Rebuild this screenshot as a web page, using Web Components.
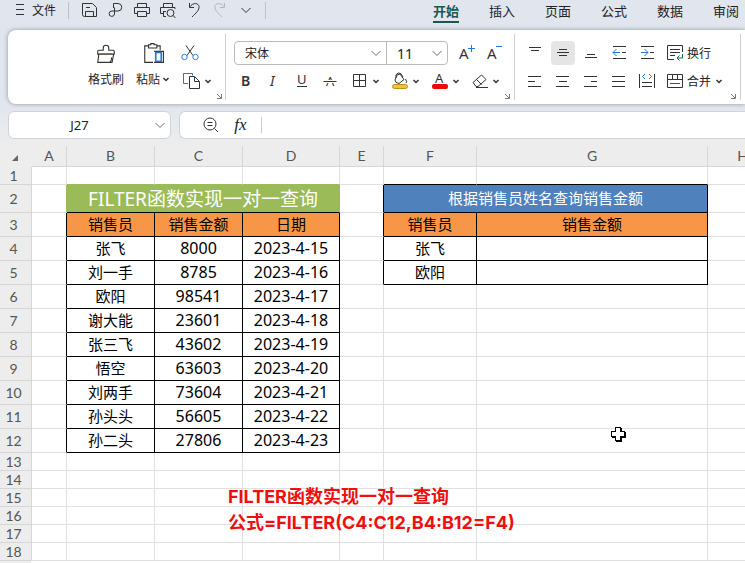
<!DOCTYPE html>
<html lang="zh-CN">
<head>
<meta charset="UTF-8">
<meta name="viewport" content="width=device-width, initial-scale=1">
<title>FILTER函数实现一对一查询</title>
<style>
    body {
        margin: 0;
        font-family: "Noto Sans", "Noto Sans CJK SC", sans-serif;
        font-size: 12px;
        color: #222;
    }
</style>
</head>
<body>
<sheet-app></sheet-app>

<script>
// every icon sits on a 20x20 box
const icons = {
    menu: '<path d="M6 4.5h8M6 9.5h8M6 14.5h8"/>',
    save: '<path d="M2.5 3.5h10l4 4v9h-12a2 2 0 0 1-2-2zM5.5 16.5v-5h8v5M6 7.5h4"/>',
    share: '<path d="M7.5 8V3.500h4.500a3.500 3.500 0 0 1 0 7.500H6a2.700 2.700 0 1 0 2.500 3V7.500"/>',
    print: '<path d="M5.5 7V3.5h9V7M5.5 13.5h-3v-6h15v6h-3M5.5 11.5h9v5h-9z"/>',
    preview: '<path d="M5.5 7V3.5h9V7M5.5 13.5h-3v-6h14.5V9M5 11.5h3M5.5 11.5v5H8"/><circle cx="12.5" cy="13" r="3.5"/><path d="M15 15.5l2.5 2.5"/>',
    undo: '<path d="M5.5 3v4.5H10M5.5 7c4-5 9-4 9.5-.5S12 13 8 17"/>',
    redo: '<path stroke="#b2b7be" d="M14.5 3v4.5H10M14.5 7c-4-5-9-4-9.5-.5S8 13 12 17"/>',
    down: '<path d="M5.5 8l4.5 4.5L14.5 8"/>',
    brush: '<path d="M3.5 7.5h4V5.5a2.5 2.5 0 1 1 5 0v2h4q1 0 1 1v2.5h-15V8.5q0-1 1-1M3.5 11l-1 7.5h13l1.500-7.5M13.5 18.5q2-2 1.5-4.5"/><path stroke="#d2590f" d="M4 10.5h12"/>',
    paste: '<path d="M6 3.5H2.5v15H10M14 3.5h2.5v4M6 2.5h2v-1h3v1h2.500v3H6z"/><path d="M11 8.5h8.5v10H11"/><path stroke="#2377d9" stroke-width="1.5" d="M12.5 9.5h5v8h-5z"/>',
    cut: '<path d="M6 2.5l7 10M14 2.5L7 12.5"/><g stroke="#2e7cd6"><circle cx="4.5" cy="14" r="2.7"/><circle cx="15.5" cy="14" r="2.7"/></g>',
    copy: '<path stroke="#2377d9" d="M6 12.5H1.5v-10h9v2"/><path d="M7.5 5.5h5l5 5v7h-10zM12.5 6v4.5H17"/>',
    bold: '<text x="5" y="15" font-size="14" font-weight="600">B</text>',
    italic: '<text x="6" y="15" font-size="14" font-style="italic" font-family="DejaVu Sans Mono">I</text>',
    underline: '<text x="5" y="13" font-size="13">U</text><path d="M5 15.5h10"/>',
    strike: '<text x="6" y="15" font-size="13">A</text><path stroke="#fff" stroke-width="3" d="M3 10.5h14"/><path d="M3.5 10.5h13"/>',
    grow: '<text x="3" y="16" font-size="15">A</text><path stroke="#2377d9" d="M12 5.5h7M15.5 2v7"/>',
    shrink: '<text x="3" y="16" font-size="15">A</text><path stroke="#2377d9" d="M12 3.5h6"/>',
    border: '<path d="M3.5 3.5h12v12h-12zM9.5 3.5v12M3.5 9.5h12"/>',
    fill: '<path d="M7 4L5 9q0 3 4 3.500l5-4-4-5.5zM6 7q-1-4 2-5t5 4M15.5 8q2 3 .5 4"/><rect x="2.5" y="13.5" width="15" height="4" rx="2" fill="#f0c337" stroke="#bd9122"/>',
    color: '<text x="5" y="12" font-size="13">A</text><rect x="2" y="13" width="16" height="5" rx="2" fill="#ee0a0a" stroke="none"/>',
    erase: '<path d="M3 11.5L11.5 4l4.5 4.5-8 7H6zM6.500 8.500l5 5M6 16.5h12"/>',
    top: '<path d="M4 4.5h12M6 7.5h8"/>',
    middle: '<path d="M6 6.5h8M4 9.5h12M6 12.5h8"/>',
    bottom: '<path d="M6 11.5h8M4 14.5h12"/>',
    outdent: '<path d="M4 3.5h13M13 9.5h4M4 15.5h13"/><path stroke="#2377d9" d="M11 9.5H4M7.5 6L4 9.5 7.5 13"/>',
    indent: '<path d="M4 3.5h13M13 9.5h4M4 15.5h13"/><path stroke="#2377d9" d="M4 9.5h7M7.5 6L11 9.5 7.5 13"/>',
    left: '<path d="M3 5.5h13M3 10.5h7M3 15.5h13"/>',
    center: '<path d="M3 5.5h13M6 10.5h8M3 15.5h13"/>',
    right: '<path d="M3 5.5h13M10 10.5h6M3 15.5h13"/>',
    justify: '<path d="M3 5.5h13M3 10.5h13M3 15.5h13"/>',
    distribute: '<path d="M2.5 3v14M17.5 3v14M5 11.5h10M5 15.5h10"/><path stroke="#2377d9" d="M8 3L5.5 5.5 8 8M12 3l2.5 2.5L12 8"/>',
    wrap: '<path d="M9 16.5H2.5v-14h15V9M5 6.5h10M5 9.5h10M5 12.5h5"/><path stroke="#1d655b" d="M17.5 11v4H12M14.5 12.5L12 15l2.5 2.5"/>',
    merge: '<path d="M2.5 3.5h15v13h-15zM2.5 8.5h15M7.5 3.5v5M12.5 3.5v5"/><path stroke="#1d655b" d="M5 12.5h10"/>',
    search: '<circle cx="10" cy="9" r="6"/><path d="M14.5 13.5L18 17M7.5 7.5h5M7.5 10.5h5"/>'
}

class UiIcon extends HTMLElement {
    connectedCallback() {
        this.attachShadow({mode: 'open'}).innerHTML = /*html*/`
            <style>
                :host { display: block; width: var(--icon-size, 20px); height: var(--icon-size, 20px); }
                svg { display: block; width: 100%; height: 100%; fill: none; stroke: #333; overflow: visible; }
                text { fill: #333; stroke: none; font-family: "Noto Sans", sans-serif; }
            </style>
            <svg viewBox="0 0 20 20" aria-hidden="true">${icons[this.getAttribute('name')]}</svg>
        `
    }
}

class UiCaret extends HTMLElement {
    connectedCallback() {
        this.attachShadow({mode: 'open'}).innerHTML = /*html*/`
            <style>
                :host { display: block; width: 8px; height: 8px; }
                svg { display: block; fill: none; stroke: #333; stroke-width: 1.5; }
            </style>
            <svg width="8" height="8" viewBox="0 0 8 8" aria-hidden="true"><path d="M1.5 3L4 5.5 6.5 3"/></svg>
        `
    }
}

class ToolButton extends HTMLElement {
    connectedCallback() {
        const caret = this.hasAttribute('caret') ? '<ui-caret></ui-caret>' : ''
        this.attachShadow({mode: 'open'}).innerHTML = /*html*/`
            <style>
                :host { display: block; padding: 2px; }
                button {
                    display: flex;
                    align-items: center;
                    gap: 2px;
                    height: 24px;
                    min-width: 24px;
                    padding: 0 2px;
                    border: 0;
                    border-radius: 4px;
                    background: none;
                    font: inherit;
                    color: inherit;
                    white-space: nowrap;
                }
                button:hover, :host([active]) button { background: #e5e5e5; }
                .label { display: flex; align-items: center; gap: 2px; }
                :host([caret]) button { padding-left: 4px; }
                :host([wide]) button { padding-left: 2px; }
                :host([wide]) .label { gap: 4px; }
                :host([big]) button {
                    flex-direction: column;
                    gap: 6px;
                    height: 56px;
                    padding: 3px 4px 0;
                    --icon-size: 22px;
                }
            </style>
            <button type="button" aria-label="${this.getAttribute('label')}">
                <ui-icon name="${this.getAttribute('icon')}"></ui-icon>
                <span class="label"><slot></slot>${caret}</span>
            </button>
        `
        if (!this.textContent && !caret) this.shadowRoot.querySelector('.label').remove()
    }
}

class MenuBar extends HTMLElement {
    connectedCallback() {
        const tools = [['save', '保存'], ['share', '输出'], ['print', '打印'], ['preview', '打印预览'], ['undo', '撤销'], ['redo', '恢复'], ['down', '更多']]
        const tabs = ['开始', '插入', '页面', '公式', '数据', '审阅']
        this.attachShadow({mode: 'open'}).innerHTML = /*html*/`
            <style>
                :host { display: flex; height: 30px; align-items: flex-start; overflow: hidden; }
                button {
                    display: flex;
                    align-items: center;
                    justify-content: center;
                    height: 20px;
                    padding: 0;
                    border: 0;
                    background: none;
                    font: inherit;
                    color: inherit;
                    flex: none;
                }
                .file { gap: 2px; margin-left: 10px; }
                .line { flex: none; width: 1px; height: 17px; margin-top: 2px; background: #bcc2cb; }
                .file + .line { margin-left: 12px; }
                .tools { display: flex; padding: 0 6px 0 8px; }
                .tools button { width: 26px; }
                nav { display: flex; margin-left: 152px; }
                nav button { width: 56px; height: 24px; font-size: 13px; }
                nav span { line-height: 20px; border-bottom: 2px solid transparent; }
                nav .on { color: #17594e; font-weight: 700; border-color: #17594e; }
            </style>
            <button class="file" type="button"><ui-icon name="menu"></ui-icon>文件</button>
            <div class="line"></div>
            <div class="tools">
                ${tools.map(([icon, name]) => `<button type="button" aria-label="${name}"><ui-icon name="${icon}"></ui-icon></button>`).join('')}
            </div>
            <div class="line"></div>
            <nav>
                ${tabs.map((tab, i) => `<button type="button"><span class="${i ? '' : 'on'}">${tab}</span></button>`).join('')}
            </nav>
        `
    }
}

class RibbonGroup extends HTMLElement {
    connectedCallback() {
        this.attachShadow({mode: 'open'}).innerHTML = /*html*/`
            <style>
                :host {
                    display: flex;
                    flex: none;
                    align-items: center;
                    height: 66px;
                    padding: 0 3px 0 6px;
                    border-right: 1px solid #d0d0d0;
                }
                button {
                    align-self: flex-end;
                    margin-left: auto;
                    padding: 0;
                    border: 0;
                    background: none;
                    line-height: 0;
                }
                svg { fill: none; stroke: #777; }
            </style>
            <slot></slot>
            <button type="button" aria-label="更多设置"><svg width="7" height="7" viewBox="0 0 7 7"><path d="M1 1l4 4M5.5 1v4.5H1"/></svg></button>
        `
    }
}

class SelectBox extends HTMLElement {
    connectedCallback() {
        this.attachShadow({mode: 'open'}).innerHTML = /*html*/`
            <style>
                :host { display: grid; align-items: center; justify-items: end; }
                select, ui-icon { grid-area: 1 / 1; }
                select {
                    appearance: none;
                    width: 100%;
                    height: 22px;
                    padding: 0 20px 0 10px;
                    border: 0;
                    background: none;
                    font: inherit;
                    color: inherit;
                }
                ui-icon { pointer-events: none; opacity: .7; }
            </style>
            <select aria-label="${this.getAttribute('label')}"><option>${this.getAttribute('value')}</option></select>
            <ui-icon name="down"></ui-icon>
        `
    }
}

class ToolRibbon extends HTMLElement {
    connectedCallback() {
        this.attachShadow({mode: 'open'}).innerHTML = /*html*/`
            <style>
                :host {
                    display: flex;
                    margin-left: 8px;
                    padding: 4px 0;
                    border-radius: 8px 0 0 8px;
                    background: #fff;
                    box-shadow: 0 0 4px rgba(60, 70, 80, .5);
                }
                .row { display: flex; align-items: center; height: 28px; }
                .clip { width: 218px; box-sizing: border-box; padding-left: 74px; }
                .text { width: 289px; box-sizing: border-box; }
                .align { width: 226px; box-sizing: border-box; }
                /* the font row is a little wider than the one under it */
                .fonts { margin-right: -4px; }
                .combos {
                    display: flex;
                    margin: 0 4px 0 2px;
                    border: 1px solid #bbb;
                    border-radius: 4px;
                }
                .font { width: 151px; }
                .size { width: 60px; border-left: 1px solid #bbb; font-size: 14px; }
            </style>
            <ribbon-group class="clip">
                <tool-button big icon="brush" label="格式刷">格式刷</tool-button>
                <tool-button big caret icon="paste" label="粘贴">粘贴</tool-button>
                <div>
                    <div class="row"><tool-button icon="cut" label="剪切"></tool-button></div>
                    <div class="row"><tool-button caret icon="copy" label="复制"></tool-button></div>
                </div>
            </ribbon-group>
            <ribbon-group class="text">
                <div>
                    <div class="row fonts">
                        <div class="combos">
                            <select-box class="font" label="字体" value="宋体"></select-box>
                            <select-box class="size" label="字号" value="11"></select-box>
                        </div>
                        <tool-button icon="grow" label="增大字号"></tool-button>
                        <tool-button icon="shrink" label="减小字号"></tool-button>
                    </div>
                    <div class="row">
                        <tool-button icon="bold" label="加粗"></tool-button>
                        <tool-button icon="italic" label="倾斜"></tool-button>
                        <tool-button icon="underline" label="下划线"></tool-button>
                        <tool-button icon="strike" label="删除线"></tool-button>
                        <tool-button caret icon="border" label="边框"></tool-button>
                        <tool-button caret icon="fill" label="填充颜色"></tool-button>
                        <tool-button caret icon="color" label="字体颜色"></tool-button>
                        <tool-button caret icon="erase" label="清除"></tool-button>
                    </div>
                </div>
            </ribbon-group>
            <ribbon-group class="align">
                <div>
                    <div class="row">
                        <tool-button icon="top" label="顶端对齐"></tool-button>
                        <tool-button active icon="middle" label="垂直居中"></tool-button>
                        <tool-button icon="bottom" label="底端对齐"></tool-button>
                        <tool-button icon="outdent" label="减少缩进"></tool-button>
                        <tool-button icon="indent" label="增加缩进"></tool-button>
                        <tool-button icon="wrap" label="换行">换行</tool-button>
                    </div>
                    <div class="row">
                        <tool-button icon="left" label="左对齐"></tool-button>
                        <tool-button icon="center" label="水平居中"></tool-button>
                        <tool-button icon="right" label="右对齐"></tool-button>
                        <tool-button icon="justify" label="两端对齐"></tool-button>
                        <tool-button icon="distribute" label="分散对齐"></tool-button>
                        <tool-button icon="merge" caret wide label="合并">合并</tool-button>
                    </div>
                </div>
            </ribbon-group>
        `
    }
}

class FormulaBar extends HTMLElement {
    connectedCallback() {
        this.attachShadow({mode: 'open'}).innerHTML = /*html*/`
            <style>
                :host { display: flex; gap: 8px; padding: 7px 0 7px 8px; }
                .box {
                    display: flex;
                    align-items: center;
                    box-sizing: border-box;
                    height: 28px;
                    border: 1px solid #cfd2d6;
                    border-radius: 6px;
                    background: #fff;
                }
                .name { width: 163px; }
                .formula { flex: 1; padding-left: 20px; border-right: 0; border-radius: 6px 0 0 6px; }
                input {
                    flex: 1;
                    min-width: 0;
                    padding: 0;
                    border: 0;
                    outline: 0;
                    background: none;
                    font: inherit;
                    color: inherit;
                }
                .name input { text-align: center; font-size: 13px; }
                button { padding: 0; border: 0; background: none; color: inherit; }
                .name button { opacity: .7; }
                .fx { width: 41px; font: italic 17px/20px "Liberation Serif", serif; }
                .line { width: 1px; height: 16px; background: #ccc; }
            </style>
            <div class="box name">
                <input aria-label="名称框" value="J27">
                <button type="button" aria-label="展开名称"><ui-icon name="down"></ui-icon></button>
            </div>
            <div class="box formula">
                <button type="button" aria-label="查找"><ui-icon name="search"></ui-icon></button>
                <button class="fx" type="button">fx</button>
                <div class="line"></div>
                <input aria-label="编辑栏">
            </div>
        `
    }
}

const sales = [
    ['张飞', 8000, '2023-4-15'],
    ['刘一手', 8785, '2023-4-16'],
    ['欧阳', 98541, '2023-4-17'],
    ['谢大能', 23601, '2023-4-18'],
    ['张三飞', 43602, '2023-4-19'],
    ['悟空', 63603, '2023-4-20'],
    ['刘两手', 73604, '2023-4-21'],
    ['孙头头', 56605, '2023-4-22'],
    ['孙二头', 27806, '2023-4-23']
]
const lookup = ['张飞', '欧阳']

class SheetGrid extends HTMLElement {
    row(n) {
        const blank = (count) => '<td></td>'.repeat(count)
        if (n === 1) return blank(1) + '<td class="ge"></td>'.repeat(3) + blank(1) + '<td class="be"></td>'.repeat(2) + blank(1)
        if (n === 2) {
            return '<td class="gr"></td><td class="title" colspan="3">FILTER函数实现一对一查询</td><td class="br"></td>' +
                '<td class="query" colspan="2">根据销售员姓名查询销售金额</td><td></td>'
        }
        if (n === 3) {
            return '<td class="br"></td><td class="head">销售员</td><td class="head">销售金额</td><td class="head">日期</td>' +
                '<td class="br"></td><td class="head">销售员</td><td class="head">销售金额</td><td></td>'
        }
        if (n > 12) return blank(8)
        const [name, amount, date] = sales[n - 4]
        const left = `<td class="br"></td><td class="cell">${name}</td><td class="cell num">${amount}</td><td class="cell num">${date}</td>`
        const who = lookup[n - 4]
        return left + (who ? `<td class="br"></td><td class="cell">${who}</td><td class="cell"></td><td></td>` : blank(4))
    }

    connectedCallback() {
        const widths = [32, 35, 88, 88, 97, 44, 93, 231]
        const height = (n) => n === 2 ? 28 : n > 2 && n < 13 ? 24 : 18
        let rows = ''
        for (let n = 1; n <= 18; n++) {
            rows += `<tr style="height: ${height(n)}px"><th scope="row">${n}</th>${this.row(n)}</tr>`
        }
        this.attachShadow({mode: 'open'}).innerHTML = /*html*/`
            <style>
                :host {
                    display: block;
                    position: relative;
                    overflow: hidden;
                    background: linear-gradient(to right, #ededed 31px, #fff 31px);
                }
                table {
                    width: 100%;
                    min-width: 778px;
                    table-layout: fixed;
                    border-collapse: separate;
                    border-spacing: 0;
                    background: #fff;
                }
                th, td {
                    box-sizing: border-box;
                    padding: 0 0 2px;
                    border: 0 solid #e0e0e0;
                    border-width: 0 1px 1px 0;
                    text-align: center;
                    white-space: nowrap;
                    line-height: 16px;
                    font-size: 15px;
                    color: #000;
                }
                th {
                    padding: 0;
                    background: #ededed;
                    border-color: #d6d6d6;
                    color: #555;
                    font-family: Lato, sans-serif;
                    font-weight: 400;
                    font-size: 14px;
                }
                thead tr { height: 21px; }
                thead th:first-child { border-color: transparent; text-align: right; }
                tbody th { padding-right: 4px; }
                .corner { margin: 2px 13px 0 0; }
                .ge { border-bottom-color: #9bbb59; }
                .gr { border-right-color: #9bbb59; }
                .be { border-bottom-color: #000; }
                .br { border-right-color: #000; }
                .title {
                    padding: 0;
                    background: #9bbb59;
                    border-color: #9bbb59;
                    border-bottom-color: #000;
                    color: #fff;
                    font-size: 19px;
                    line-height: 24px;
                }
                .query { background: #4f81bd; border-color: #000; color: #fff; }
                .head { background: #f79646; border-color: #000; }
                .cell { border-color: #000; }
                .num { font-size: 16px; }
                .note {
                    position: absolute;
                    left: 228px;
                    top: 338px;
                    margin: 0;
                    font-family: Inter, "Noto Sans CJK SC", sans-serif;
                    font-size: 18px;
                    line-height: 26px;
                    font-weight: 700;
                    color: #ee0f0f;
                    white-space: nowrap;
                }
                .pointer { position: absolute; left: 611px; top: 281px; }
            </style>
            <table>
                <colgroup>${widths.map(w => `<col style="width: ${w}px">`).join('')}<col></colgroup>
                <thead>
                    <tr>
                        <th><svg class="corner" width="6" height="6" aria-hidden="true"><path fill="#666" d="M6 0v6H0z"/></svg></th>
                        ${[...'ABCDEFGH'].map(c => `<th scope="col">${c}</th>`).join('')}
                    </tr>
                </thead>
                <tbody>${rows}</tbody>
            </table>
            <p class="note">FILTER函数实现一对一查询<br>公式=FILTER(C4:C12,B4:B12=F4)</p>
            <svg class="pointer" width="16" height="16" aria-hidden="true" shape-rendering="crispEdges">
                <path d="M5 1h6v4h4v6h-4v4H5v-4H1V5h4z"/>
                <path d="M4 0h6v4h4v6h-4v4H4v-4H0V4h4z"/>
                <path fill="#fff" d="M5 1h4v4h4v4H9v4H5V9H1V5h4z"/>
            </svg>
        `
    }
}

class SheetApp extends HTMLElement {
    connectedCallback() {
        this.attachShadow({mode: 'open'}).innerHTML = /*html*/`
            <style>
                :host {
                    display: flex;
                    flex-direction: column;
                    height: 100vh;
                    overflow: hidden;
                    background: linear-gradient(#e1e6ee, #e1e6ee 100px, #ededed 146px);
                }
                sheet-grid { flex: 1; min-height: 0; }
            </style>
            <menu-bar></menu-bar>
            <tool-ribbon></tool-ribbon>
            <formula-bar></formula-bar>
            <sheet-grid></sheet-grid>
        `
    }
}

customElements.define('ui-icon', UiIcon)
customElements.define('ui-caret', UiCaret)
customElements.define('tool-button', ToolButton)
customElements.define('select-box', SelectBox)
customElements.define('ribbon-group', RibbonGroup)
customElements.define('menu-bar', MenuBar)
customElements.define('tool-ribbon', ToolRibbon)
customElements.define('formula-bar', FormulaBar)
customElements.define('sheet-grid', SheetGrid)
customElements.define('sheet-app', SheetApp)
</script>
</body>
</html>
